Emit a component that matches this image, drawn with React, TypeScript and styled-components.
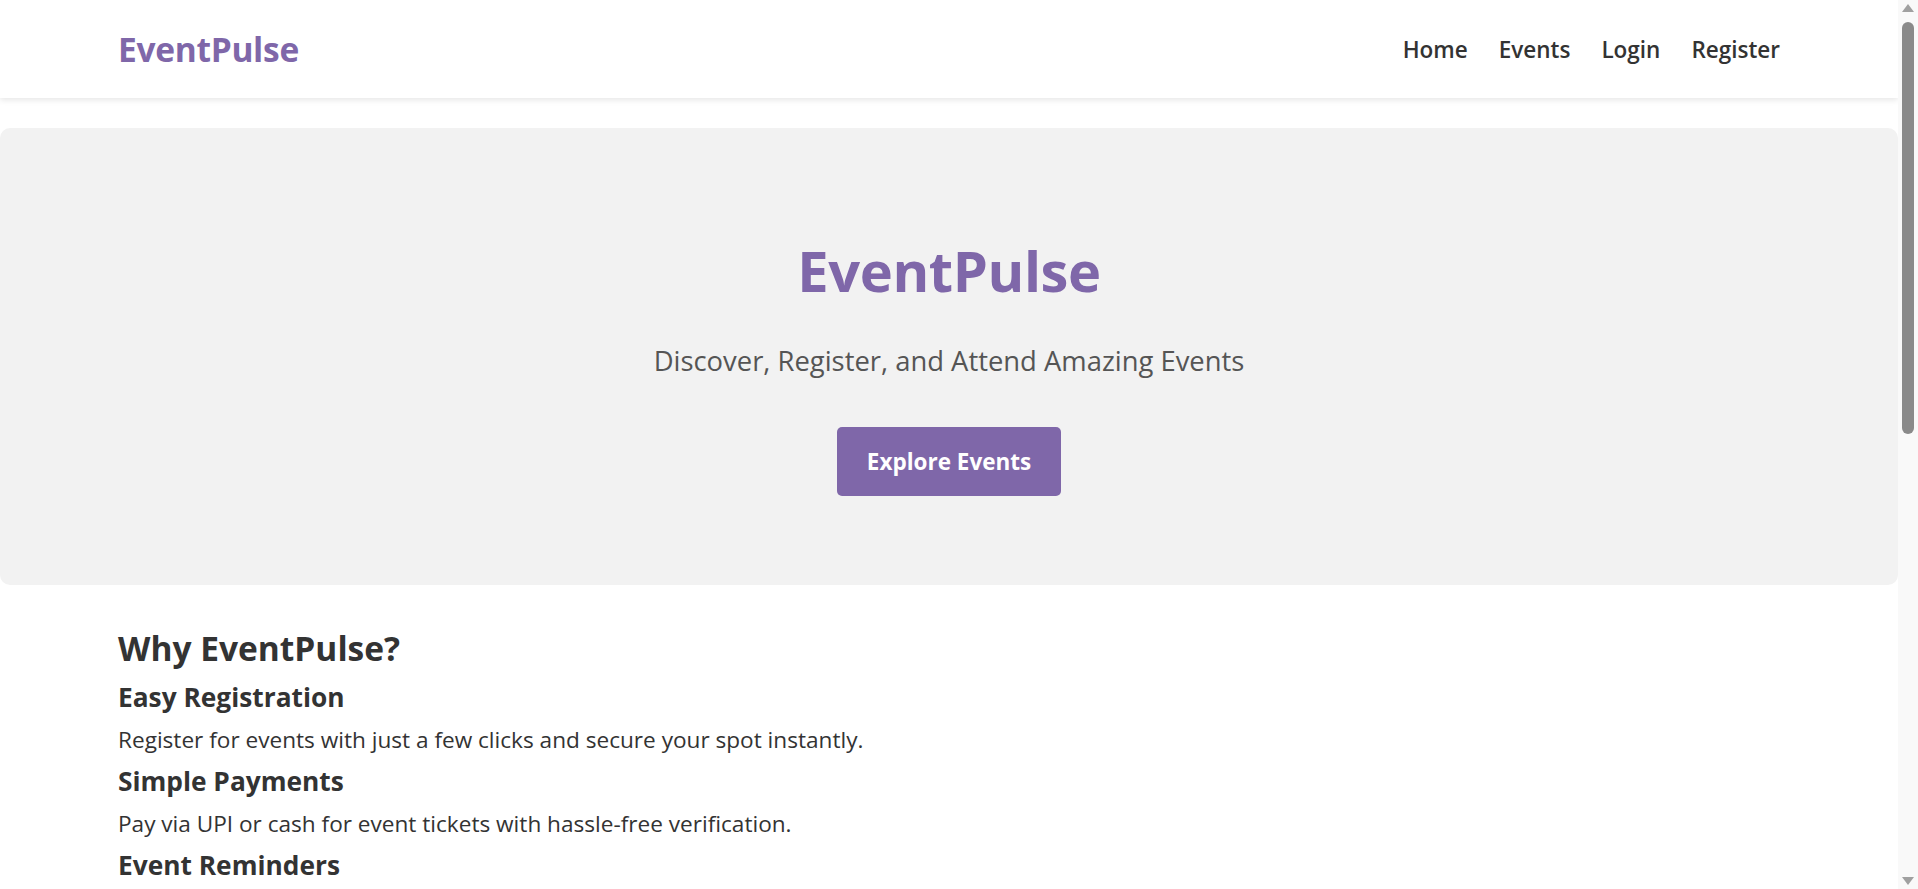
import React from 'react';
import styled, { createGlobalStyle } from 'styled-components';

const GlobalStyle = createGlobalStyle`
  html, body {
    margin: 0;
    padding: 0;
    overflow: hidden;
    background: #ffffff;
    font-family: "Open Sans", "Noto Sans", sans-serif;
    color: #333;
  }
  * {
    box-sizing: border-box;
  }
`;

const purple = '#7f67a9';

const Page = styled.div`
  display: flex;
  height: 100vh;
  width: 100%;
`;

const Main = styled.div`
  flex: 1;
  min-width: 0;
  overflow: hidden;
`;

const Navbar = styled.nav`
  height: 98px;
  display: flex;
  align-items: center;
  justify-content: space-between;
  padding: 0 118px 0 118px;
  background: #fff;
  box-shadow: 0 2px 6px rgba(0, 0, 0, 0.1);
`;

const Logo = styled.a`
  font-size: 33.5px;
  font-weight: 700;
  color: ${purple};
  text-decoration: none;
  letter-spacing: -0.3px;
`;

const NavLinks = styled.div`
  display: flex;
  gap: 31px;
`;

const NavLink = styled.a`
  font-size: 22.5px;
  font-weight: 600;
  color: #333;
  text-decoration: none;
`;

const Hero = styled.section`
  margin-top: 30px;
  height: 457px;
  background: #f2f2f2;
  border-radius: 10px;
  padding-top: 106px;
  display: flex;
  flex-direction: column;
  align-items: center;
`;

const HeroTitle = styled.h1`
  margin: 0;
  font-size: 56px;
  line-height: 72px;
  font-weight: 700;
  color: ${purple};
  letter-spacing: -0.4px;
`;

const HeroSubtitle = styled.p`
  margin: 37px 0 0;
  font-size: 27.4px;
  line-height: 36px;
  color: #555;
`;

const ExploreButton = styled.a`
  margin-top: 48px;
  height: 69px;
  padding: 0 30px;
  display: inline-flex;
  align-items: center;
  background: ${purple};
  color: #fff;
  border-radius: 5px;
  font-size: 22.5px;
  font-weight: 700;
  text-decoration: none;
`;

const Section = styled.section`
  padding: 44px 118px 0;
`;

const SectionTitle = styled.h2`
  margin: 0 0 15px;
  font-size: 33.5px;
  line-height: 38px;
  font-weight: 700;
  color: #333;
`;

const FeatureTitle = styled.h3`
  margin: 12px 0 14px;
  font-size: 26.3px;
  line-height: 30px;
  font-weight: 700;
  color: #333;
`;

const FeatureText = styled.p`
  margin: 0;
  font-size: 22.6px;
  line-height: 28px;
  color: #333;
`;

const ScrollTrack = styled.div`
  width: 20px;
  height: 100%;
  background: #f9f9f9;
  display: flex;
  flex-direction: column;
  align-items: center;
`;

const ScrollArrow = styled.div<{ down?: boolean }>`
  width: 0;
  height: 0;
  margin: ${(p) => (p.down ? 'auto 0 4px' : '4px 0 0')};
  border-left: 6px solid transparent;
  border-right: 6px solid transparent;
  ${(p) => (p.down ? 'border-top: 8px solid #a0a0a0;' : 'border-bottom: 8px solid #a0a0a0;')}
`;

const ScrollThumb = styled.div`
  margin-top: 10px;
  width: 12px;
  height: 412px;
  border-radius: 6px;
  background: #8a8a8a;
`;

const features: { title: string; text?: string }[] = [
  { title: 'Easy Registration', text: 'Register for events with just a few clicks and secure your spot instantly.' },
  { title: 'Simple Payments', text: 'Pay via UPI or cash for event tickets with hassle-free verification.' },
  { title: 'Event Reminders' },
];

const App = () => {
  return (
    <>
      <GlobalStyle />
      <Page>
        <Main>
          <Navbar>
            <Logo href="#">EventPulse</Logo>
            <NavLinks>
              <NavLink href="#">Home</NavLink>
              <NavLink href="#">Events</NavLink>
              <NavLink href="#">Login</NavLink>
              <NavLink href="#">Register</NavLink>
            </NavLinks>
          </Navbar>
          <Hero>
            <HeroTitle>EventPulse</HeroTitle>
            <HeroSubtitle>Discover, Register, and Attend Amazing Events</HeroSubtitle>
            <ExploreButton href="#">Explore Events</ExploreButton>
          </Hero>
          <Section>
            <SectionTitle>Why EventPulse?</SectionTitle>
            {features.map((f) => (
              <div key={f.title}>
                <FeatureTitle>{f.title}</FeatureTitle>
                {f.text && <FeatureText>{f.text}</FeatureText>}
              </div>
            ))}
          </Section>
        </Main>
        <ScrollTrack>
          <ScrollArrow />
          <ScrollThumb />
          <ScrollArrow down />
        </ScrollTrack>
      </Page>
    </>
  );
};

export default App;
